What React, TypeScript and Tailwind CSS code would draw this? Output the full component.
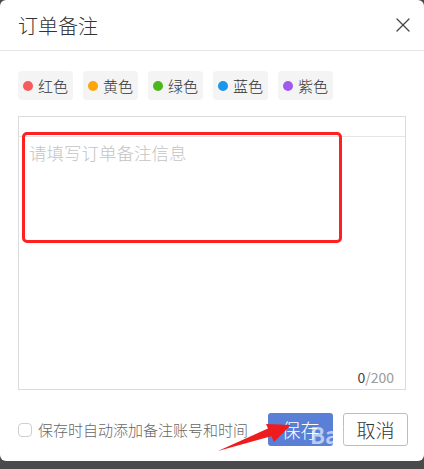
import { X } from "lucide-react";

const tags = [
   { name: "红色", color: "bg-[#f65a5a]" },
   { name: "黄色", color: "bg-[#fca60b]" },
   { name: "绿色", color: "bg-[#4cb71d]" },
   { name: "蓝色", color: "bg-[#1a96ea]" },
   { name: "紫色", color: "bg-[#a05af0]" },
]

export default function App() {
   return (
      <div className="relative w-[424px] h-[469px] bg-[#4a4a4a] font-['Noto_Sans_CJK_SC','Microsoft_YaHei',sans-serif] overflow-hidden">
         <div className="h-[461px] bg-white rounded-md flex flex-col">
            <div className="h-[51px] shrink-0 flex items-center justify-between pl-[18px] pr-[9px] border-b border-[#e6e6e6]">
               <h1 className="text-[20px] leading-none text-[#333] font-light pt-[2px]">订单备注</h1>
               <X className="w-[24px] h-[24px] text-[#444]" strokeWidth={1.3} />
            </div>

            <div className="flex gap-[10px] px-[18px] mt-[20px]">
               {tags.map(t => (
                  <div key={t.name} className="w-[55px] h-[29px] bg-[#f4f4f4] rounded-sm flex items-center pl-[5px] gap-[5px]">
                     <span className={`w-[10px] h-[10px] rounded-full ${t.color}`} />
                     <span className="text-[15px] leading-none text-[#333] font-light">{t.name}</span>
                  </div>
               ))}
            </div>

            <div className="mx-[18px] mt-[16px] h-[274px] border border-[#dcdcdc] flex flex-col">
               <div className="h-[20px] border-b border-[#e4e4e4]" />
               <textarea
                  className="flex-1 resize-none outline-none px-[10px] pt-[4px] text-[17.5px] leading-[24px] text-[#333] font-light placeholder:text-[#c4c4c4]"
                  placeholder="请填写订单备注信息"
               />
               <div className="text-right pr-[11px] pb-[5px] text-[14px] leading-none">
                  <span className="text-[#444]">0</span>
                  <span className="text-[#9a9a9a]">/200</span>
               </div>
            </div>

            <div className="flex items-center justify-between px-[16px] mt-[23px]">
               <label className="flex items-center gap-[6px] pl-[2px]">
                  <span className="w-[14px] h-[14px] border border-[#cfcfcf] rounded-sm bg-white" />
                  <span className="text-[15px] leading-none text-[#666] font-light">保存时自动添加备注账号和时间</span>
               </label>
               <div className="flex gap-[10px]">
                  <button className="w-[65px] h-[33px] rounded-[3px] bg-[#5a7fd7] text-white text-[19px] leading-none font-light">保存</button>
                  <button className="w-[65px] h-[33px] rounded-[3px] border border-[#bdbdbd] bg-white text-[#333] text-[19px] leading-none font-light">取消</button>
               </div>
            </div>
         </div>

         {/* annotations */}
         <div className="absolute left-[22px] top-[132px] w-[320px] h-[111px] border-[3px] border-[#ff2121] rounded-[5px] pointer-events-none" />
         <svg className="absolute inset-0 pointer-events-none" width="424" height="469" viewBox="0 0 424 469">
            <polygon points="218,451 269,428 272,436" fill="#ee1c1c" />
            <polygon points="291,425 266,424 274,442" fill="#ee1c1c" />
         </svg>
         <div className="absolute left-[310px] top-[423px] text-[22px] font-bold text-white/60 leading-none pointer-events-none">Bai</div>
         <div className="absolute left-[308px] top-[447px] text-[8px] text-white/50 leading-none pointer-events-none">jingyan.baidu.com</div>
      </div>
   )
}
